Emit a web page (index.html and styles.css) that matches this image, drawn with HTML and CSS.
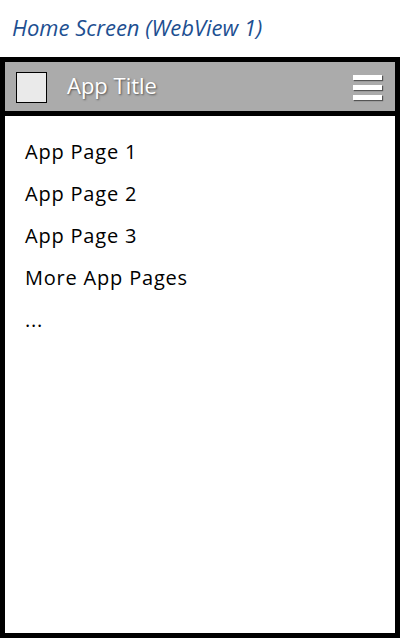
FILE: index.html
```html
<!DOCTYPE html>
<html lang="en">
<head>
  <meta charset="UTF-8">
  <meta name="viewport" content="width=device-width, initial-scale=1.0">
  <title>Home Screen</title>
  <link rel="stylesheet" href="styles.css">
</head>
<body>

  <h1 class="screen-label">Home Screen (WebView 1)</h1>

  <!-- Phone frame -->
  <div class="phone">
    <div class="app-bar">
      <div class="app-icon"></div>
      <span class="app-title">App Title</span>
      <div class="menu-btn">
        <span></span>
        <span></span>
        <span></span>
      </div>
    </div>

    <ul class="page-list">
      <li>App Page 1</li>
      <li>App Page 2</li>
      <li>App Page 3</li>
      <li>More App Pages</li>
      <li>...</li>
    </ul>
  </div>

</body>
</html>
```

FILE: styles.css
```css
html, body {
  margin: 0;
  padding: 0;
  background-color: #fff;
}
body {
  font-family: "Open Sans", Arial, sans-serif;
  width: 400px;
  height: 638px;
  display: flex;
  flex-direction: column;
}
.screen-label {
  margin: 0;
  height: 57px;
  box-sizing: border-box;
  padding: 12px 0 0 12px;
  font-size: 22px;
  font-weight: normal;
  font-style: italic;
  color: #1d4f91;
  line-height: 30px;
}
.phone {
  flex: 1;
  border: 5px solid #000;
  display: flex;
  flex-direction: column;
}
.app-bar {
  height: 49px;
  background-color: #ababab;
  border-bottom: 5px solid #000;
  display: flex;
  align-items: center;
  padding: 0 13px 0 11px;
}
.app-icon {
  width: 29px;
  height: 29px;
  border: 1px solid #000;
  background-color: #eaeaea;
  margin-top: 2px;
}
.app-title {
  margin: 0 0 3px 20px;
  flex: 1;
  color: #fff;
  font-size: 22px;
  text-shadow: 1px 1px 2px rgba(0, 0, 0, 0.5);
}
.menu-btn {
  display: flex;
  flex-direction: column;
  gap: 5px;
  margin-top: 1px;
}
.menu-btn span {
  display: block;
  width: 29px;
  height: 5px;
  background-color: #fff;
  box-shadow: 1px 1px 1px rgba(0, 0, 0, 0.5);
}
.page-list {
  list-style: none;
  margin: 0;
  padding: 15px 0 0 20px;
}
.page-list li {
  font-size: 20px;
  line-height: 42px;
  color: #000;
  letter-spacing: 0.8px;
}
```
